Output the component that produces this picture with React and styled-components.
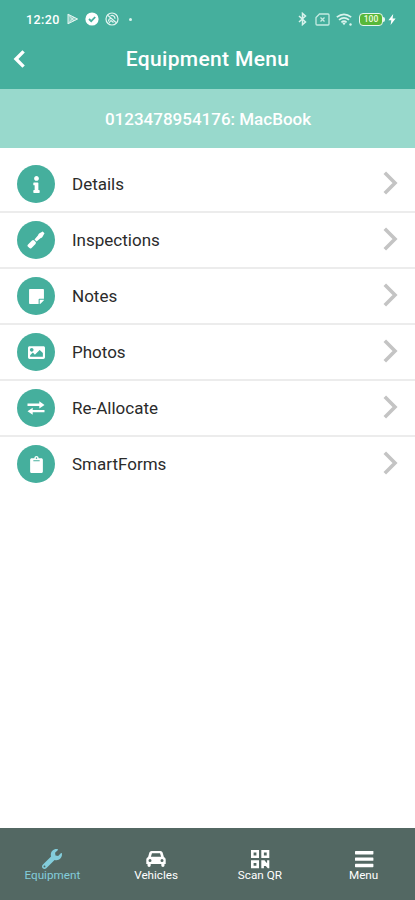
import React, { useState } from 'react';
import styled, { createGlobalStyle } from 'styled-components';
import {
  FaInfo,
  FaStickyNote,
  FaImage,
  FaClipboard,
  FaWrench,
} from 'react-icons/fa';

const ScrewdriverIcon = () => (
  <svg width="18" height="18" viewBox="0 0 18 18" fill="currentColor">
    <path d="M.8 13.7L5 9.5q1.2-1 2.2 0l1.300 1.300q1 1 0 2.200l-4.200 4.200q-1 .8-1.900-.1L.8 15.600q-.8-.9 0-1.900z" />
    <path d="M7.500 8.500l3.600-4.300q.2-1 1-1.600L15.700.5l1.800 1.800-2.100 3.600q-.6.8-1.600 1l-4.300 3.600z" />
  </svg>
);

const SwapIcon = () => (
  <svg width="18" height="14" viewBox="0 0 18 14" fill="currentColor">
    <path d="M.5 2.600h11.800V.2l5.200 3.700-5.200 3.500V5H.5z" />
    <path d="M17.500 8.900H5.700V6.700L.5 10.200l5.200 3.600v-2.500h11.800z" />
  </svg>
);

const CarIcon = () => (
  <svg width="20" height="18" viewBox="0 0 20 18" fill="currentColor">
    <path
      fillRule="evenodd"
      d="M5.5 1h9q1.6 0 2.1 1.6L17.9 7q1.8.5 1.8 2.6V14h-1.2v1.6q0 1.4-1.6 1.4t-1.6-1.4V14H4.7v1.6Q4.7 17 3.1 17t-1.6-1.4V14H.3V9.6Q.3 7.5 2.1 7l1.3-4.4Q3.9 1 5.5 1zM6 3.2L4.9 6.8h10.2L14 3.2zM4 9a1.5 1.5 0 1 0 0 3 1.5 1.5 0 0 0 0-3zM16 9a1.5 1.5 0 1 0 0 3 1.5 1.5 0 0 0 0-3z"
    />
  </svg>
);

const QrIcon = () => (
  <svg width="20" height="20" viewBox="0 0 20 20" fill="currentColor">
    <path
      fillRule="evenodd"
      d="M1 1h8v8H1zM3.6 3.6v2.8h2.8V3.6zM11.3 1h8v8h-8zM13.9 3.6v2.8h2.8V3.6zM1 11.3h8v8H1zM3.6 13.9v2.8h2.8v-2.8z"
    />
    <path d="M11.3 11.3h3.200l1.900 2.500h.7v-2.500h2.200v8h-1.500l-2-2.300h-1.900v2.300h-2.600z" />
  </svg>
);

const BarsIcon = () => (
  <svg width="20" height="20" viewBox="0 0 20 20" fill="currentColor">
    <rect x="1" y="2" width="18.4" height="3.4" rx="0.6" />
    <rect x="1" y="8.4" width="18.4" height="3.4" rx="0.6" />
    <rect x="1" y="14.8" width="18.4" height="3.4" rx="0.6" />
  </svg>
);

const menuItems = [
  { id: 'details', label: 'Details', Icon: FaInfo },
  { id: 'inspections', label: 'Inspections', Icon: ScrewdriverIcon },
  { id: 'notes', label: 'Notes', Icon: FaStickyNote },
  { id: 'photos', label: 'Photos', Icon: FaImage },
  { id: 'allocate', label: 'Re-Allocate', Icon: SwapIcon },
  { id: 'forms', label: 'SmartForms', Icon: FaClipboard },
];

const tabs = [
  { id: 'equipment', label: 'Equipment', Icon: FaWrench },
  { id: 'vehicles', label: 'Vehicles', Icon: CarIcon },
  { id: 'scan', label: 'Scan QR', Icon: QrIcon },
  { id: 'menu', label: 'Menu', Icon: BarsIcon },
];

const EquipmentMenu = () => {
  const [activeTab, setActiveTab] = useState('equipment');

  return (
    <Screen>
      <GlobalStyle />
      <StatusBar>
        <StatusGroup>
          <Clock>12:20</Clock>
          <svg width="12" height="12" viewBox="0 0 12 12" fill="none" stroke="#e3f5f1">
            <path d="M1 1.2v9.6L10.6 6z" fill="#8fcfc2" />
            <path d="M1 1.2L7 8M1 10.8L7 4" strokeWidth="0.8" />
          </svg>
          <svg width="14" height="14" viewBox="0 0 14 14">
            <circle cx="7" cy="7" r="6.6" fill="#fff" />
            <path d="M4 7l2.2 2.2L10.2 5" fill="none" stroke="#45af9d" strokeWidth="1.8" />
          </svg>
          <svg width="14" height="14" viewBox="0 0 14 14" fill="none" stroke="#e3f5f1" strokeWidth="1.2">
            <circle cx="7" cy="7" r="6" />
            <path d="M3 3.5l8 7M3.5 9.5c0-2 1-3 2.5-3M5.5 3.8c2.5-1 4.5.5 4.5 3M4 11l2-2.5 2.5 2" />
          </svg>
          <Dot />
        </StatusGroup>
        <StatusGroup>
          <BluetoothIcon width="9" height="14" viewBox="0 0 9 14">
            <path d="M1 4l6.5 6-3 2.6V1.4l3 2.6L1 10" />
          </BluetoothIcon>
          <svg width="15" height="13" viewBox="0 0 15 13" fill="none" stroke="#c5ebe2" strokeWidth="1.3">
            <path d="M4.5 1H13q1 0 1 1v9q0 1-1 1H2q-1 0-1-1V4.5z" />
            <path d="M5.5 4.5l4 4M9.5 4.5l-4 4" />
          </svg>
          <svg width="17" height="13" viewBox="0 0 17 13" fill="none" stroke="#d9f3ed" strokeWidth="1.7">
            <path d="M.8 4.2q7.2-5.8 14.4 0M3 6.9q5-4 10 0M5.4 9.300q2.600-2.200 5.200 0" />
            <path d="M6 9.5l2 2.800 2-2.800z" fill="#d9f3ed" stroke="none" />
            <circle cx="14.5" cy="11.5" r="1.2" fill="#d9f3ed" stroke="none" />
          </svg>
          <BatteryWrap>
            <Battery>100</Battery>
            <BatteryTip />
          </BatteryWrap>
          <BoltIcon width="8" height="11" viewBox="0 0 8 11">
            <path d="M5.2 0L.4 6.2h2.900L2.600 11l5-6.600h-3z" />
          </BoltIcon>
        </StatusGroup>
      </StatusBar>

      <Header>
        <BackButton aria-label="Back">
          <svg width="12" height="18" viewBox="0 0 12 18" fill="none" stroke="#fff" strokeWidth="3.4">
            <path d="M10.6 1.4L3 9l7.6 7.6" />
          </svg>
        </BackButton>
        <Title>Equipment Menu</Title>
      </Header>

      <AssetBanner>0123478954176: MacBook</AssetBanner>

      <List>
        {menuItems.map(({ id, label, Icon }) => (
          <Row key={id}>
            <IconCircle>
              <Icon size={17} />
            </IconCircle>
            <RowLabel>{label}</RowLabel>
            <Chevron width="15" height="24" viewBox="0 0 15 24">
              <path d="M1.8 1.8L12 12 1.8 22.2" />
            </Chevron>
          </Row>
        ))}
      </List>

      <TabBar>
        {tabs.map(({ id, label, Icon }) => (
          <Tab key={id} $active={activeTab === id} onClick={() => setActiveTab(id)}>
            <TabIcon>
              <Icon size={20} />
            </TabIcon>
            <TabLabel>{label}</TabLabel>
          </Tab>
        ))}
      </TabBar>
    </Screen>
  );
};

const GlobalStyle = createGlobalStyle`
  * {
    box-sizing: border-box;
  }

  body {
    margin: 0;
    font-family: Roboto, sans-serif;
  }

  svg {
    flex: none;
    display: block;
  }
`;

const Screen = styled.div`
  display: flex;
  flex-direction: column;
  height: 100vh;
  background-color: #fff;
`;

const StatusBar = styled.div`
  display: flex;
  justify-content: space-between;
  align-items: center;
  height: 38px;
  padding: 0 19px 0 26px;
  background-color: #45af9d;
`;

const StatusGroup = styled.div`
  display: flex;
  align-items: center;
  gap: 6px;
`;

const Clock = styled.span`
  width: 35px;
  color: #fff;
  font-size: 12.5px;
  font-weight: 500;
  letter-spacing: 0.4px;
`;

const Dot = styled.span`
  width: 3px;
  height: 3px;
  margin-left: 4px;
  border-radius: 50%;
  background-color: #d9f3ed;
`;

const BluetoothIcon = styled.svg`
  margin-right: 2px;
  fill: none;
  stroke: #d9f3ed;
  stroke-width: 1.5px;
`;

const BoltIcon = styled.svg`
  margin-left: -3px;
  fill: #fff;
`;

const BatteryWrap = styled.span`
  display: flex;
  align-items: center;
`;

const Battery = styled.span`
  width: 24px;
  height: 13px;
  border: 1.5px solid #e6f7ee;
  border-radius: 4px;
  background-color: #58b839;
  color: #effbe0;
  font-size: 8.5px;
  font-weight: 500;
  line-height: 11px;
  text-align: center;
`;

const BatteryTip = styled.span`
  width: 2px;
  height: 5px;
  border-radius: 0 2px 2px 0;
  background-color: #e6f7ee;
`;

const Header = styled.header`
  display: grid;
  grid-template-columns: 40px 1fr 40px;
  align-items: center;
  height: 51px;
  padding-bottom: 10px;
  background-color: #45af9d;
`;

const BackButton = styled.button`
  padding: 0 0 0 13px;
  border: none;
  background: none;
  cursor: pointer;
`;

const Title = styled.h1`
  margin: 0;
  color: #fff;
  font-size: 21px;
  font-weight: 500;
  letter-spacing: 0.35px;
  text-align: center;
`;

const AssetBanner = styled.div`
  display: flex;
  justify-content: center;
  align-items: center;
  height: 59px;
  padding-left: 1px;
  background-color: #98d9cc;
  color: #fff;
  font-size: 17px;
  font-weight: 500;
`;

const List = styled.main`
  flex: 1;
  padding-top: 8px;
`;

const Row = styled.div`
  display: flex;
  align-items: center;
  height: 56px;
  padding: 0 17px;
  box-shadow: 0 1px 0 #ececec, inset 0 -1px 0 #ececec;
  cursor: pointer;

  &:last-child {
    box-shadow: none;
  }
`;

const IconCircle = styled.span`
  display: flex;
  justify-content: center;
  align-items: center;
  width: 38px;
  height: 38px;
  border-radius: 50%;
  background-color: #45af9d;
  color: #fff;
`;

const RowLabel = styled.span`
  flex: 1;
  margin-left: 17px;
  color: #2b2b2b;
  font-size: 17px;
`;

const Chevron = styled.svg`
  margin-bottom: 2px;
  fill: none;
  stroke: #c4c4c4;
  stroke-width: 3.6px;
`;

const TabBar = styled.nav`
  display: grid;
  grid-template-columns: repeat(4, 1fr);
  height: 72px;
  background-color: #536863;
`;

const Tab = styled.button`
  display: flex;
  flex-direction: column;
  align-items: center;
  padding: 20px 0 0 1px;
  border: none;
  background: none;
  color: ${props => props.$active ? '#83cddb' : '#fff'};
  font-family: inherit;
  cursor: pointer;
`;

const TabIcon = styled.span`
  display: flex;
  align-items: center;
  height: 21px;
`;

const TabLabel = styled.span`
  font-size: 11.7px;
  line-height: 13px;
`;

export default EquipmentMenu;
